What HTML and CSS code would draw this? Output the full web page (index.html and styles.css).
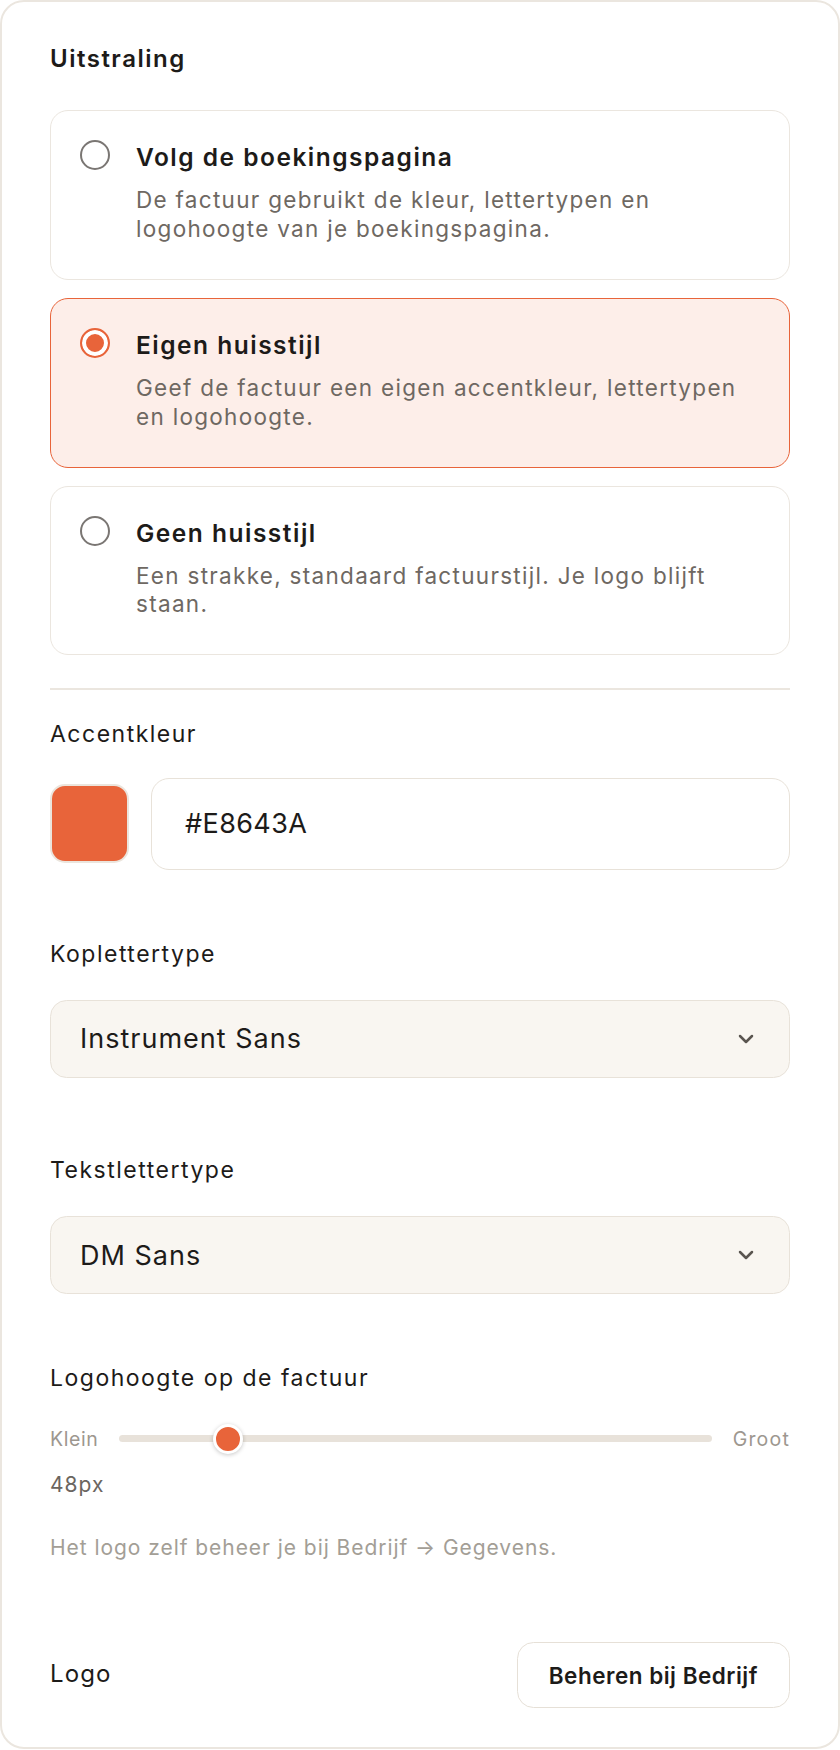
FILE: index.html
```html
<!DOCTYPE html>
<html lang="nl">
<head>
<meta charset="utf-8">
<title>Uitstraling</title>
<link rel="stylesheet" href="styles.css">
</head>
<body>
<div class="panel">
  <h2 class="section-title">Uitstraling</h2>
  <div class="options">
    <div class="option">
      <span class="radio"></span>
      <div class="option-body">
        <div class="option-title">Volg de boekingspagina</div>
        <div class="option-desc">De factuur gebruikt de kleur, lettertypen en logohoogte van je boekingspagina.</div>
      </div>
    </div>
    <div class="option selected">
      <span class="radio"></span>
      <div class="option-body">
        <div class="option-title">Eigen huisstijl</div>
        <div class="option-desc">Geef de factuur een eigen accentkleur, lettertypen en logohoogte.</div>
      </div>
    </div>
    <div class="option">
      <span class="radio"></span>
      <div class="option-body">
        <div class="option-title">Geen huisstijl</div>
        <div class="option-desc">Een strakke, standaard factuurstijl. Je logo blijft staan.</div>
      </div>
    </div>
  </div>
  <div class="divider"></div>
  <div class="field field-accent">
    <div class="label">Accentkleur</div>
    <div class="color-row">
      <span class="swatch"></span>
      <div class="text-input">#E8643A</div>
    </div>
  </div>
  <div class="field field-head">
    <div class="label">Koplettertype</div>
    <div class="select">
      <span>Instrument Sans</span>
      <svg class="chevron" width="16" height="10" viewBox="0 0 16 10"><path d="M2 2 L8 8 L14 2" fill="none" stroke="#5a5550" stroke-width="2.5" stroke-linecap="round" stroke-linejoin="round"/></svg>
    </div>
  </div>
  <div class="field field-body">
    <div class="label">Tekstlettertype</div>
    <div class="select">
      <span>DM Sans</span>
      <svg class="chevron" width="16" height="10" viewBox="0 0 16 10"><path d="M2 2 L8 8 L14 2" fill="none" stroke="#5a5550" stroke-width="2.5" stroke-linecap="round" stroke-linejoin="round"/></svg>
    </div>
  </div>
  <div class="field field-logo">
    <div class="label">Logohoogte op de factuur</div>
    <div class="slider-row">
      <span class="slider-end">Klein</span>
      <div class="track"><span class="thumb" style="left: 15.8%"></span></div>
      <span class="slider-end slider-end-right">Groot</span>
    </div>
    <div class="slider-value">48px</div>
    <p class="help">Het logo zelf beheer je bij Bedrijf → Gegevens.</p>
  </div>
  <div class="logo-row">
    <span class="logo-label">Logo</span>
    <button class="btn">Beheren bij Bedrijf</button>
  </div>
</div>
</body>
</html>
```
FILE: styles.css
```css
* { box-sizing: border-box; }
html, body { margin: 0; padding: 0; background: #fff; }
body {
  font-family: "Inter", "Liberation Sans", sans-serif;
  color: #1d1b19;
}
.panel {
  width: 840px;
  border: 2px solid #ebe6df;
  border-radius: 24px;
  padding: 41.3px 48px 39px;
  background: #fff;
}
.section-title {
  margin: 0 0 34.7px;
  font-size: 24px;
  line-height: 32px;
  font-weight: 600;
  letter-spacing: 1.5px;
}
.options { display: flex; flex-direction: column; gap: 18px; }
.option {
  display: flex;
  gap: 26px;
  align-items: flex-start;
  padding: 30.5px 29px 35.5px;
  border: 1.5px solid #ebe6df;
  border-radius: 18px;
  background: #fff;
}
.option.selected { border-color: #e8643a; background: #fdeee9; }
.radio {
  flex: none;
  width: 30px; height: 30px;
  margin-top: -1px;
  border-radius: 50%;
  border: 2px solid #7a7673;
  background: #fff;
}
.option.selected .radio {
  border-color: #e8643a;
  background: #e8643a;
  box-shadow: inset 0 0 0 4px #fff;
}
.option-title { font-size: 24.5px; line-height: 32px; font-weight: 600; letter-spacing: 1.5px; }
.option-desc { margin-top: 12.8px; font-size: 22.5px; line-height: 28.5px; letter-spacing: 1.3px; color: #6e6862; }
.divider { margin-top: 33px; height: 1.5px; background: #ebe6df; }
.label { font-size: 23px; line-height: 31.5px; font-weight: 400; letter-spacing: 1.5px; }
.field-accent { margin-top: 29px; }
.field-accent .label { margin-bottom: 27.6px; }
.field-head { margin-top: 68.6px; }
.field-body { margin-top: 76.9px; }
.field-logo { margin-top: 68.9px; }
.field-head .label, .field-body .label { margin-bottom: 29.8px; }
.color-row { display: flex; align-items: center; gap: 21.5px; }
.swatch {
  flex: none;
  width: 79px; height: 79px;
  border-radius: 15px;
  border: 2px solid #ebe5dd;
  background: #e8643a;
}
.text-input {
  flex: 1;
  height: 92px;
  display: flex; align-items: center;
  padding-left: 33.5px;
  border: 1.5px solid #e8e2d9;
  border-radius: 18px;
  font-size: 27px;
  letter-spacing: 0.4px;
}
.select {
  height: 78px;
  display: flex; align-items: center; justify-content: space-between;
  padding: 0 35px 0 29px;
  border: 1.5px solid #e8e2d9;
  border-radius: 16.5px;
  background: #f9f6f1;
  font-size: 27px;
  letter-spacing: 1px;
}
.chevron { flex: none; }
.slider-row { margin-top: 29.3px; height: 30px; display: flex; align-items: center; gap: 21px; }
.slider-end { font-size: 19.5px; letter-spacing: 0.6px; color: #9d978f; }
.slider-end-right { letter-spacing: 1.2px; }
.track { position: relative; flex: 1; height: 7.5px; border-radius: 4px; background: #e8e2da; }
.thumb {
  position: absolute; top: 50%;
  width: 30px; height: 30px;
  margin-top: -15px;
  border-radius: 50%;
  background: #e8643a;
  border: 3px solid #fff;
  box-shadow: 0 1px 4px rgba(0,0,0,.22);
}
.slider-value { margin-top: 17.4px; font-size: 21px; line-height: 28px; letter-spacing: 1px; color: #6b655f; }
.help { margin: 33.8px 0 0; font-size: 21px; line-height: 29px; letter-spacing: 0.95px; color: #a39e96; }
.logo-row { margin-top: 80.1px; display: flex; align-items: center; justify-content: space-between; }
.logo-label { font-size: 24px; font-weight: 400; letter-spacing: 1.1px; margin-top: -3px; }
.btn {
  height: 66px;
  padding: 0 31px;
  border: 1.5px solid #e6e0d7;
  border-radius: 16.5px;
  background: #fff;
  font-family: inherit;
  font-size: 22.5px;
  font-weight: 600;
  letter-spacing: 0.5px;
  color: #1d1b19;
}
```
